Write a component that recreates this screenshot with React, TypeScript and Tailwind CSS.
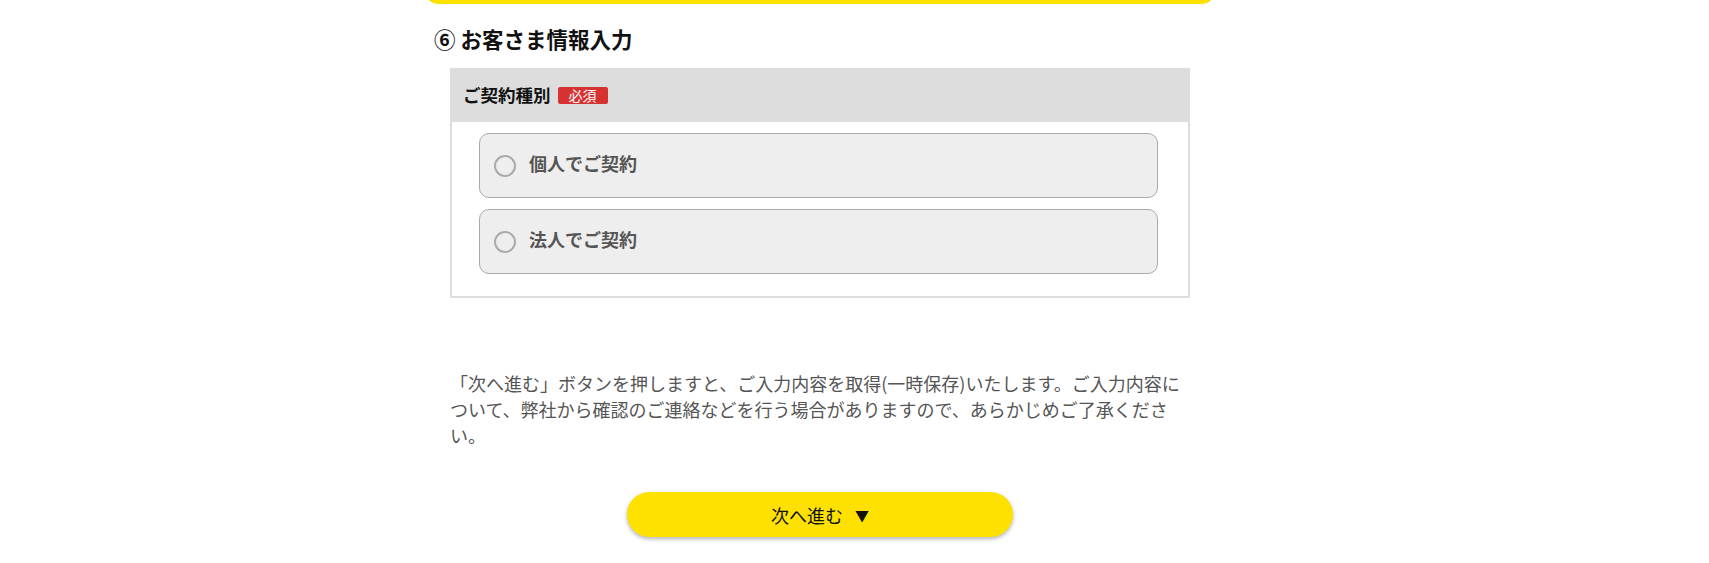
import React from "react";

const font = { fontFamily: '"Noto Sans CJK JP", "Noto Sans", sans-serif' };

function RadioOption({ label }: { label: string }) {
  return (
    <label className="flex h-[65px] cursor-pointer items-center rounded-[10px] border border-[#aaaaaa] bg-[#eeeeee] pl-[14px]">
      <span className="box-border h-[22px] w-[22px] shrink-0 rounded-full border-2 border-[#aaaaaa] bg-[#eeeeee]" />
      <span className="mb-[5px] ml-[13px] text-[18px] font-bold leading-none text-[#555555]">{label}</span>
    </label>
  );
}

export default function App() {
  return (
    <div className="min-h-[563px] w-full bg-white" style={font}>
      <div className="ml-[427px] w-[786px]">
        <div className="-mt-[16px] h-[20px] rounded-[10px] bg-[#ffe100]" />
        <h2 className="mt-[19px] pl-[7px] text-[21.5px] font-bold leading-[31px] text-[#111111]">
          ⑥ お客さま情報入力
        </h2>
        <div className="mx-[23px] mt-[14px] border-2 border-t-0 border-[#dddddd]">
          <div className="-mx-[2px] flex h-[54px] items-center bg-[#dddddd] pl-[13px]">
            <span className="text-[17.5px] font-bold leading-none text-[#111111]">ご契約種別</span>
            <span className="ml-[7px] flex h-[17px] w-[50px] items-center justify-center rounded-[2px] bg-[#d63232] text-[14px] leading-none text-white">
              必須
            </span>
          </div>
          <div className="flex flex-col gap-[11px] pb-[22px] pl-[27px] pr-[30px] pt-[11px]">
            <RadioOption label="個人でご契約" />
            <RadioOption label="法人でご契約" />
          </div>
        </div>
        <p className="mx-[23px] mt-[72px] text-[18px] leading-[26px] text-[#555555]">
          「次へ進む」ボタンを押しますと、ご入力内容を取得(一時保存)いたします。ご入力内容について、弊社から確認のご連絡などを行う場合がありますので、あらかじめご了承ください。
        </p>
        <div className="mt-[44px] flex justify-center">
          <button className="flex h-[45px] w-[386px] items-center justify-center rounded-full bg-[#ffe100] text-[18px] leading-none text-[#111111] shadow-[0_2px_4px_rgba(0,0,0,0.3)]">
            <span>次へ進む</span>
            <span className="ml-[12px] text-[14px]">▼</span>
          </button>
        </div>
      </div>
    </div>
  );
}
